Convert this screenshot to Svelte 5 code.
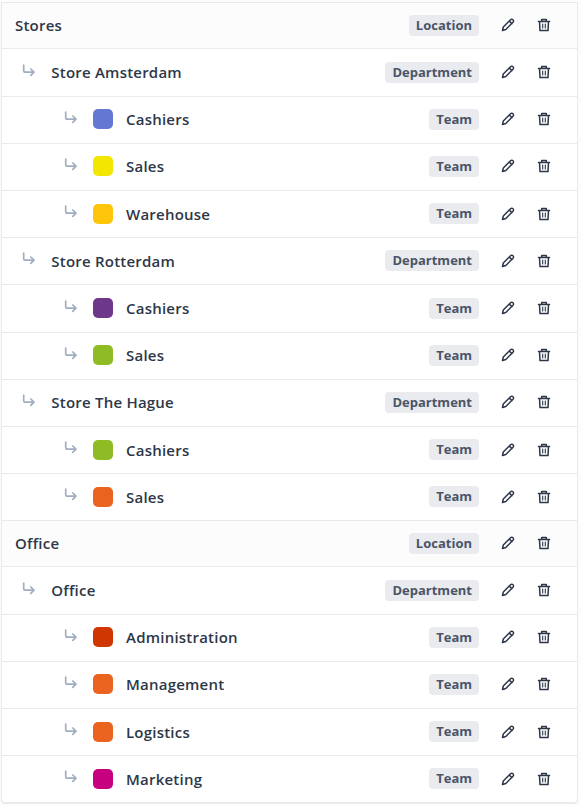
<script>
	const rows = [
		{ name: 'Stores', type: 'Location' },
		{ name: 'Store Amsterdam', type: 'Department' },
		{ name: 'Cashiers', type: 'Team', color: '#6478d3' },
		{ name: 'Sales', type: 'Team', color: '#f3e600' },
		{ name: 'Warehouse', type: 'Team', color: '#ffc50a' },
		{ name: 'Store Rotterdam', type: 'Department' },
		{ name: 'Cashiers', type: 'Team', color: '#6d3889' },
		{ name: 'Sales', type: 'Team', color: '#8fbc25' },
		{ name: 'Store The Hague', type: 'Department' },
		{ name: 'Cashiers', type: 'Team', color: '#8fbc25' },
		{ name: 'Sales', type: 'Team', color: '#ea6420' },
		{ name: 'Office', type: 'Location' },
		{ name: 'Office', type: 'Department' },
		{ name: 'Administration', type: 'Team', color: '#cf3600' },
		{ name: 'Management', type: 'Team', color: '#ea6420' },
		{ name: 'Logistics', type: 'Team', color: '#ea6420' },
		{ name: 'Marketing', type: 'Team', color: '#c6007e' }
	]
</script>

<main>
	<div class="tree">
		{#each rows as row}
			<div class="row {row.type.toLowerCase()}">
				{#if row.type != 'Location'}
					<svg class="arrow" width="14" height="14" viewBox="0 0 14 14">
						<path d="M1.7 1.2v5.3q0 1.7 1.7 1.7h8.4M8.8 5l3.2 3.2-3.2 3.2" />
					</svg>
				{/if}
				{#if row.color}
					<span class="swatch" style="background: {row.color}"></span>
				{/if}
				<span class="name">{row.name}</span>
				<span class="badge">{row.type}</span>
				<button aria-label="Edit">
					<svg width="14" height="14" viewBox="0 0 14 14">
						<path d="M1.5 12.5l.8-3.5 7.2-7.2a1.7 1.7 0 0 1 2.5 0 1.7 1.7 0 0 1 0 2.5L4.8 11.5zM8.3 3l2.6 2.6" />
					</svg>
				</button>
				<button aria-label="Delete">
					<svg width="14" height="14" viewBox="0 0 14 14">
						<path d="M1.5 3.4h11M4.7 3V1.5h4.6V3M2.5 3.6l.5 9h8l.5-9" />
						<path class="thin" d="M5.7 6v4M8.3 6v4" />
					</svg>
				</button>
			</div>
		{/each}
	</div>
</main>

<style>
	:global(body) {
		background: #fdfdfd;
	}
	main {
		box-sizing: border-box;
		height: 805px;
		padding: 2.3px 3px 0 1px;
		overflow: hidden;
		font-family: "Open Sans", "Noto Sans", sans-serif;
		color: #2d3748;
	}
	.tree {
		border: 1px solid #e9eaee;
		border-top: 0;
		border-radius: 0 0 4px 4px;
		background: #fff;
		box-shadow: 0 1px 1px #e9eaee;
	}
	.row {
		box-sizing: border-box;
		display: flex;
		align-items: center;
		height: 47.19px;
		padding: 0 22px 0.8px 0;
		border-top: 1px solid #e9eaee;
	}
	.location {
		height: 46.1px;
		padding-left: 13px;
		background: #fcfcfc;
	}
	.department {
		padding-left: 20.3px;
	}
	.team {
		padding-left: 62px;
	}
	svg {
		display: block;
		fill: none;
		stroke: #2d3748;
		stroke-width: 1.5;
		stroke-linecap: round;
		stroke-linejoin: round;
	}
	.arrow {
		margin: 0 15px 3px 0;
		stroke: #a0aec0;
		stroke-width: 1.7;
	}
	.swatch {
		width: 20px;
		height: 20px;
		margin-right: 13px;
		border-radius: 5px;
	}
	.name {
		flex: 1;
		font-size: 15px;
		font-weight: 560;
		letter-spacing: 0.22px;
		line-height: 20px;
	}
	.badge {
		margin-right: 17.5px;
		padding: 0 7px;
		border-radius: 4px;
		background: #e9ebef;
		color: #4a5568;
		font-size: 13px;
		font-weight: 700;
		line-height: 21px;
	}
	button {
		margin: 0;
		padding: 4px;
		border: 0;
		background: none;
	}
	button + button {
		margin-left: 14.5px;
	}
	.thin {
		stroke-width: 1.1;
	}
</style>
